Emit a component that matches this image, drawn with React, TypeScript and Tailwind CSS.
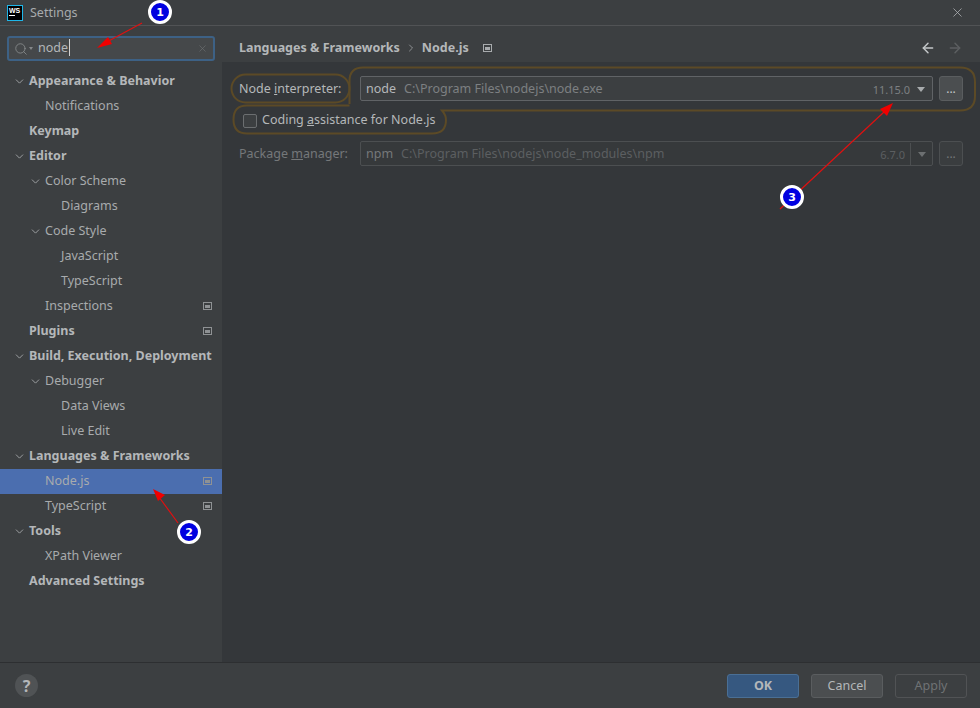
import { ChevronDown, ChevronRight, ArrowLeft, ArrowRight, X, Search } from "lucide-react";

type TreeItem = { label: string; indent: 0 | 1 | 2; bold?: boolean; open?: boolean; page?: boolean; selected?: boolean };

const TREE: TreeItem[] = [
  { label: "Appearance & Behavior", indent: 0, bold: true, open: true },
  { label: "Notifications", indent: 1 },
  { label: "Keymap", indent: 0, bold: true },
  { label: "Editor", indent: 0, bold: true, open: true },
  { label: "Color Scheme", indent: 1, open: true },
  { label: "Diagrams", indent: 2 },
  { label: "Code Style", indent: 1, open: true },
  { label: "JavaScript", indent: 2 },
  { label: "TypeScript", indent: 2 },
  { label: "Inspections", indent: 1, page: true },
  { label: "Plugins", indent: 0, bold: true, page: true },
  { label: "Build, Execution, Deployment", indent: 0, bold: true, open: true },
  { label: "Debugger", indent: 1, open: true },
  { label: "Data Views", indent: 2 },
  { label: "Live Edit", indent: 2 },
  { label: "Languages & Frameworks", indent: 0, bold: true, open: true },
  { label: "Node.js", indent: 1, page: true, selected: true },
  { label: "TypeScript", indent: 1, page: true },
  { label: "Tools", indent: 0, bold: true, open: true },
  { label: "XPath Viewer", indent: 1 },
  { label: "Advanced Settings", indent: 0, bold: true },
];

const INDENTS = { 0: "pl-[29px]", 1: "pl-[45px]", 2: "pl-[61px]" };

function PageIcon({ className }: { className?: string }) {
  return (
    <svg width="9" height="8" viewBox="0 0 9 8" className={className}>
      <rect x="0.5" y="0.5" width="8" height="7" fill="none" stroke="currentColor" />
      <rect x="2" y="3" width="5" height="3" fill="currentColor" />
    </svg>
  );
}

function TreeRow({ item }: { item: TreeItem }) {
  return (
    <div
      className={`relative flex h-[25px] shrink-0 items-center pr-[10px] ${INDENTS[item.indent]} ${
        item.selected ? "bg-[#4b6eaf]" : ""
      } ${item.bold ? "font-bold text-[#b4b7b9]" : "text-[#a8abad]"}`}
    >
      {item.open && (
        <ChevronDown
          size={13}
          strokeWidth={1.7}
          className={`absolute text-[#a3a6a8] ${item.indent === 0 ? "left-[13px]" : "left-[29px]"}`}
        />
      )}
      <span className="flex-1 whitespace-nowrap">{item.label}</span>
      {item.page && <PageIcon className="mb-[2px] text-[#8f9294]" />}
    </div>
  );
}

function Annotations() {
  return (
    <svg width="980" height="708" viewBox="0 0 980 708" className="pointer-events-none absolute left-0 top-0">
      <g fill="none" stroke="#5c4a26" strokeWidth="2">
        <rect x="231.5" y="74.5" width="118" height="28" rx="14" />
        <path d="M349.5 104 L349.5 81 Q349.5 67.5 363 67.5 L960 67.5 Q975 67.5 975 82 L975 96 Q975 110.5 960 110.5 L442 110.5 Q446 115 446 120 Q446 133.5 432 133.5 L247 133.5 Q233.5 133.5 233.5 119.5 Q233.5 105.5 247 105.5 L349.5 105.5" />
      </g>
      <g stroke="#e01010" strokeWidth="1.2" fill="#f00000">
        <line x1="142" y1="23" x2="105" y2="43" />
        <polygon points="97,48 108,37 112,44" stroke="none" />
        <line x1="178" y1="523" x2="159" y2="497" />
        <polygon points="153,489 165,495 158,501" stroke="none" />
        <line x1="780" y1="209" x2="884" y2="112" />
        <polygon points="893,103 887,116 880,109" stroke="none" />
      </g>
    </svg>
  );
}

function Badge({ n, className }: { n: number; className: string }) {
  return (
    <div
      className={`absolute flex h-[24px] w-[24px] items-center justify-center rounded-full border-[3px] border-white bg-[#0000e0] font-['DejaVu_Sans',sans-serif] text-[11px] font-bold text-white ${className}`}
    >
      {n}
    </div>
  );
}

function PathField({
  name,
  path,
  version,
  disabled,
}: {
  name: string;
  path: string;
  version: string;
  disabled?: boolean;
}) {
  return (
    <div className="flex flex-1 items-center gap-[6px]">
      <div
        className={`flex h-[25px] flex-1 items-center rounded-[2px] border pl-[5px] pt-[1px] ${
          disabled ? "border-[#4c4f51] bg-[#36393b]" : "border-[#606366] bg-[#3c3f41]"
        }`}
      >
        <span className={disabled ? "text-[#75787a]" : "text-[#b4b7b9]"}>{name}</span>
        <span className={`ml-2 flex-1 ${disabled ? "text-[#5c5f61]" : "text-[#7d8082]"}`}>{path}</span>
        <span className={`text-[11px] ${disabled ? "mr-[5px] text-[#5c5f61]" : "text-[#7d8082]"}`}>{version}</span>
        <div className={`flex h-full w-[22px] items-center justify-center ${disabled ? "border-l border-[#4c4f51]" : ""}`}>
          <div
            className={`h-0 w-0 border-x-[4px] border-t-[5px] border-x-transparent ${
              disabled ? "border-t-[#6c6f71]" : "border-t-[#a8abad]"
            }`}
          />
        </div>
      </div>
      <button
        className={`flex h-[25px] w-[24px] items-center justify-center rounded-[3px] border text-[12px] ${
          disabled
            ? "border-[#4c4f51] bg-[#3a3d3f] text-[#75787a]"
            : "border-[#5a5d5f] bg-[#4b4e50] text-[#c4c7c9]"
        }`}
      >
        ...
      </button>
    </div>
  );
}

export default function App() {
  return (
    <div className="relative flex h-[708px] w-[980px] flex-col overflow-hidden bg-[#3c3f41] font-['Noto_Sans',sans-serif] text-[12.5px] leading-none">
      <div className="flex h-[26px] shrink-0 items-center border-b border-[#515355] pl-[7px] pr-[15px]">
        <div className="flex h-[16px] w-[16px] flex-col items-start border border-[#1fb6e8] bg-black px-[1px] pt-[1px]">
          <span className="font-['Liberation_Sans',sans-serif] text-[7px] font-bold leading-[7px] text-white">WS</span>
          <span className="mt-[1px] h-[1px] w-[6px] bg-white" />
        </div>
        <span className="ml-[7px] flex-1 pt-[1px] text-[#a8abad]">Settings</span>
        <X size={15} strokeWidth={1.2} className="text-[#b4b7b9]" />
      </div>

      <div className="flex min-h-0 flex-1">
        <aside className="flex w-[222px] shrink-0 flex-col pt-[10px]">
          <div className="mx-[7px] flex h-[25px] items-center rounded-[3px] border-2 border-[#3d6185] bg-[#45484a] pl-[5px] pr-[5px]">
            <Search size={14} strokeWidth={1.4} className="text-[#8b8e90]" />
            <div className="ml-[1px] h-0 w-0 border-x-[2.5px] border-t-[3px] border-x-transparent border-t-[#85888a]" />
            <span className="ml-[5px] flex-1 text-[#b4b7b9]">
              node<span className="ml-[1px] border-l border-[#d0d0d0]" />
            </span>
            <X size={11} strokeWidth={1.3} className="text-[#6f7274]" />
          </div>
          <div className="mt-[8px] flex flex-col">
            {TREE.map((item, i) => (
              <TreeRow key={i} item={item} />
            ))}
          </div>
        </aside>

        <main className="flex min-w-0 flex-1 flex-col bg-[#34373a]">
          <div className="flex h-[36px] shrink-0 items-center bg-[#3c3f41] pl-[17px] pr-[17px] pt-[8px] font-bold text-[#b4b7b9]">
            <span>Languages &amp; Frameworks</span>
            <ChevronRight size={12} strokeWidth={1.5} className="mx-[5px] text-[#a8abad]" />
            <span>Node.js</span>
            <PageIcon className="ml-[14px] text-[#a8abad]" />
            <span className="flex-1" />
            <ArrowLeft size={16} strokeWidth={2.2} className="text-[#c4c7c9]" />
            <ArrowRight size={16} strokeWidth={2.2} className="ml-[11px] text-[#5c5f61]" />
          </div>

          <div className="flex flex-col pl-[17px] pr-[17px] pt-[14px]">
            <div className="flex h-[25px] items-center">
              <span className="w-[121px] pt-[2px] text-[#b4b7b9]">
                Node <u>i</u>nterpreter:
              </span>
              <PathField name="node" path="C:\Program Files\nodejs\node.exe" version="11.15.0" />
            </div>
            <label className="mt-[7px] flex h-[25px] items-center pl-[4px] text-[#b4b7b9]">
              <span className="h-[14px] w-[14px] rounded-[2px] border border-[#6b6e70] bg-[#3c3f41]" />
              <span className="ml-[5px]">
                Coding <u>a</u>ssistance for Node.js
              </span>
            </label>
            <div className="mt-[8px] flex h-[25px] items-center">
              <span className="w-[121px] pt-[2px] text-[#75787a]">
                Package <u>m</u>anager:
              </span>
              <PathField name="npm" path="C:\Program Files\nodejs\node_modules\npm" version="6.7.0" disabled />
            </div>
          </div>
        </main>
      </div>

      <div className="flex h-[46px] shrink-0 items-center border-t border-[#2d2f31] pl-[15px] pr-[13px]">
        <div className="flex h-[23px] w-[23px] items-center justify-center rounded-full bg-[#505355] text-[16px] font-bold text-[#b4b7b9]">
          ?
        </div>
        <span className="flex-1" />
        <button className="h-[24px] w-[72px] rounded-[3px] border border-[#4a6f95] bg-[#365880] pt-[1px] font-bold text-[#b4b7b9]">
          OK
        </button>
        <button className="ml-[12px] h-[24px] w-[72px] rounded-[3px] border border-[#5a5d5f] bg-[#4b4e50] pt-[1px] text-[#b4b7b9]">
          Cancel
        </button>
        <button className="ml-[12px] h-[24px] w-[72px] rounded-[3px] border border-[#515355] bg-[#3c3f41] pt-[1px] text-[#6f7274]">
          Apply
        </button>
      </div>

      <Annotations />
      <Badge n={1} className="left-[148px] top-0" />
      <Badge n={2} className="left-[177px] top-[520px]" />
      <Badge n={3} className="left-[780px] top-[185px]" />
    </div>
  );
}
